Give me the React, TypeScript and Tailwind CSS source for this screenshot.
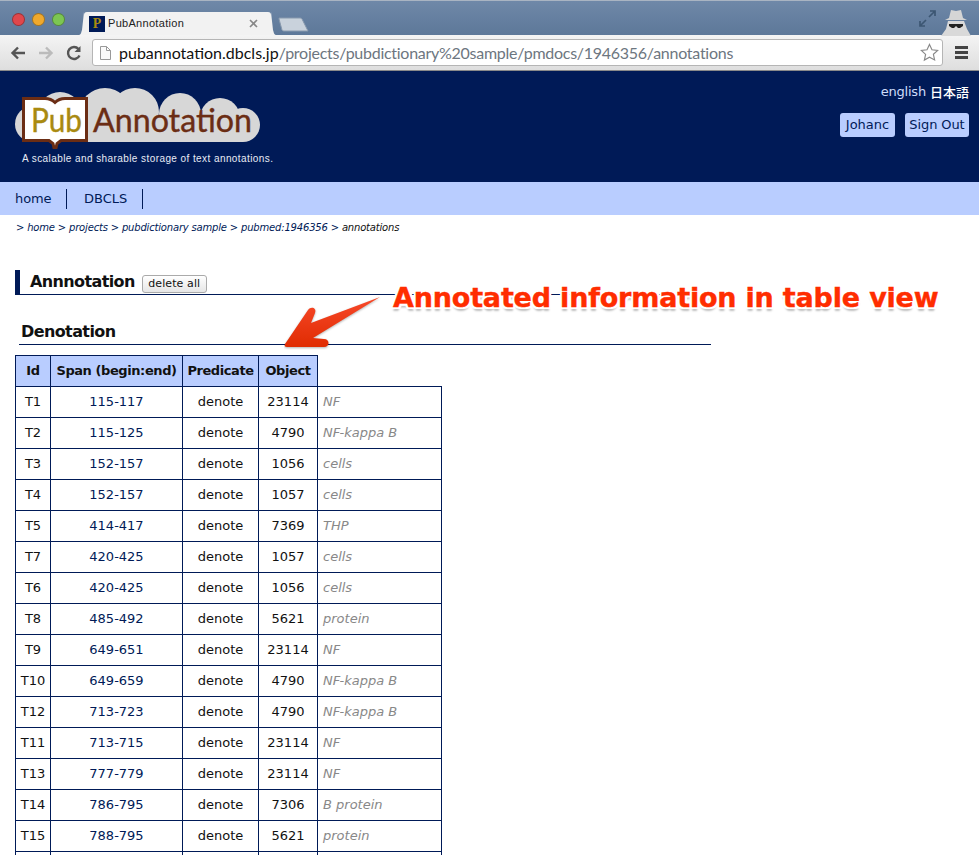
const rows: [string, string, string, string][] = [
  ["T1", "115-117", "23114", "NF"],
  ["T2", "115-125", "4790", "NF-kappa B"],
  ["T3", "152-157", "1056", "cells"],
  ["T4", "152-157", "1057", "cells"],
  ["T5", "414-417", "7369", "THP"],
  ["T7", "420-425", "1057", "cells"],
  ["T6", "420-425", "1056", "cells"],
  ["T8", "485-492", "5621", "protein"],
  ["T9", "649-651", "23114", "NF"],
  ["T10", "649-659", "4790", "NF-kappa B"],
  ["T12", "713-723", "4790", "NF-kappa B"],
  ["T11", "713-715", "23114", "NF"],
  ["T13", "777-779", "23114", "NF"],
  ["T14", "786-795", "7306", "B protein"],
  ["T15", "788-795", "5621", "protein"],
  ["", "", "", ""],
];

function Traffic({ color }: { color: string }) {
  return <div className={`w-[13px] h-[13px] rounded-full border border-black/30 ${color}`} />;
}

function BrowserChrome() {
  return (
    <div className="h-[71px] flex flex-col font-['Liberation_Sans',sans-serif]">
      <div className="h-[35px] flex items-end bg-gradient-to-b from-[#6f88a8] to-[#5d7899] border-t border-[#a9b4c2] relative">
        <div className="flex gap-[7px] pl-[12px] pb-[9px] w-[78px] shrink-0">
          <Traffic color="bg-[#e0474c]" />
          <Traffic color="bg-[#f0a92d]" />
          <Traffic color="bg-[#7cc652]" />
        </div>
        <svg className="w-[6px] h-[23px] shrink-0" viewBox="0 0 6 23">
          <path d="M0 23c3 0 3-2 4-5L6 0v23z" fill="#f2f2f2" />
        </svg>
        <div className="w-[187px] h-[23px] bg-[#f2f2f2] rounded-t-[3px] flex items-center pl-[5px] pr-[13px] text-[#222]">
          <div className="w-[16px] h-[16px] bg-[#001a57] text-[#a98a10] text-[14px] font-bold leading-[16px] text-center font-['Liberation_Serif',serif]">
            P
          </div>
          <span className="ml-[3px] text-[11px] tracking-[0.3px]">PubAnnotation</span>
          <svg className="ml-auto w-[9px] h-[9px]" viewBox="0 0 9 9" stroke="#888" strokeWidth="1.6">
            <path d="M1 1l7 7M8 1L1 8" />
          </svg>
        </div>
        <svg className="w-[6px] h-[23px] shrink-0" viewBox="0 0 6 23">
          <path d="M0 0l2 18c1 3 1 5 4 5H0z" fill="#f2f2f2" />
        </svg>
        <svg className="ml-[1px] mb-[3px] w-[31px] h-[15px] shrink-0" viewBox="0 0 31 15">
          <path d="M1 1h21a2 2 0 0 1 2 1l6 12H6a2 2 0 0 1-2-1L1 2z" fill="#c9d2dc" stroke="#8899ad" />
        </svg>
        <svg className="absolute left-[919px] top-[9px] w-[17px] h-[17px]" viewBox="0 0 17 17" fill="none" stroke="#3c5672" strokeWidth="1.7">
          <path d="M10 7l6-6M11 1h5v5M7 10l-6 6M1 11v5h5" />
        </svg>
        <svg className="absolute left-[939px] top-[7px] w-[34px] h-[28px]" viewBox="0 0 34 28">
          <path d="M10 10l2-8 5 1 5-1 2 8 4 2H6z" fill="#d5d5d5" />
          <path d="M9 13h16l3 8 4 7H2l5-7z" fill="#d9d9d9" />
          <path d="M10 16h14v2l-3 2h-2l-2-2-2 2h-2l-3-2z" fill="#222" />
        </svg>
      </div>
      <div className="h-[36px] bg-gradient-to-b from-[#f4f4f4] to-[#dedede] border-b border-[#8a8a8a] flex items-center">
        <svg className="ml-[10px] w-[16px] h-[14px]" viewBox="0 0 16 14" fill="none" stroke="#555" strokeWidth="2.4">
          <path d="M15 7H3M8 1.5L2.5 7 8 12.5" />
        </svg>
        <svg className="ml-[12px] w-[16px] h-[14px]" viewBox="0 0 16 14" fill="none" stroke="#bbb" strokeWidth="2.4">
          <path d="M1 7h12M8 1.5L13.5 7 8 12.5" />
        </svg>
        <svg className="ml-[12px] w-[16px] h-[16px]" viewBox="0 0 16 16" fill="none" stroke="#555" strokeWidth="2.4">
          <path d="M13.5 10.5A6 6 0 1 1 12.5 4" />
          <path d="M14.5 1v6h-6z" fill="#555" stroke="none" />
        </svg>
        <div className="ml-[10px] w-[851px] h-[27px] bg-white border border-[#b5b5b5] rounded-[3px] flex items-center pl-[7px] pr-[3px]">
          <svg className="w-[11px] h-[14px] shrink-0" viewBox="0 0 11 14" fill="#fafafa" stroke="#999">
            <path d="M.5.5h6l4 4v9H.5zM6.5.5v4h4" />
          </svg>
          <span className="ml-[8px] text-[16px] whitespace-nowrap font-['Lato',sans-serif]">
            <span className="text-[#111]">pubannotation.dbcls.jp</span>
            <span className="text-[#6d7680] tracking-[-0.27px]">/projects/pubdictionary%20sample/pmdocs/1946356/annotations</span>
          </span>
          <svg className="ml-auto w-[19px] h-[19px] shrink-0" viewBox="0 0 20 20" fill="#fff" stroke="#888" strokeWidth="1.2">
            <path d="M10 1.5l2.6 5.6 6 .7-4.5 4.1 1.3 6L10 15l-5.4 3 1.3-6L1.4 7.8l6-.7z" />
          </svg>
        </div>
        <div className="ml-[12px] w-[13px] flex flex-col gap-[2px]">
          <div className="h-[3px] bg-[#444]" />
          <div className="h-[3px] bg-[#444]" />
          <div className="h-[3px] bg-[#444]" />
        </div>
      </div>
    </div>
  );
}

function Logo() {
  return (
    <svg className="w-[245px] h-[63px] block" viewBox="0 0 245 63">
      <g fill="#d7d7d7">
        <circle cx="18" cy="38" r="18" />
        <circle cx="45" cy="28" r="22" />
        <circle cx="90" cy="28" r="26" />
        <circle cx="120" cy="26" r="24" />
        <circle cx="165" cy="28" r="21" />
        <circle cx="205" cy="32" r="20" />
        <circle cx="228" cy="39" r="17" />
        <rect x="18" y="30" width="210" height="26" />
      </g>
      <path
        d="M8.5 12.5H30c4 0 7 1 10 4 3-3 6-4 10-4h21.5v42H46l-4 3-1 4.5h-2l-1-4.5-4-3H8.5z"
        fill="#fff"
        stroke="#6b2d14"
        strokeWidth="3"
      />
      <text x="16" y="46" fontFamily="'Lato', sans-serif" fontSize="32" fill="#a98a10" stroke="#a98a10" strokeWidth="0.4" textLength="51" lengthAdjust="spacingAndGlyphs">
        Pub
      </text>
      <text x="78" y="46" fontFamily="'Lato', sans-serif" fontSize="33" fill="#6b2d14" stroke="#6b2d14" strokeWidth="0.4" textLength="159" lengthAdjust="spacingAndGlyphs">
        Annotation
      </text>
    </svg>
  );
}

function Header() {
  return (
    <div className="h-[111px] bg-[#001a57] flex justify-between">
      <div className="pl-[15px] pt-[15px]">
        <Logo />
        <div className="pl-[7px] mt-[3px] text-[10px] leading-[13px] text-[#e8ecf5] font-['Liberation_Sans',sans-serif] tracking-[0.42px]">
          A scalable and sharable storage of text annotations.
        </div>
      </div>
      <div className="pr-[10px] pt-[13px] flex flex-col items-end">
        <div className="text-[13px] leading-[16px] flex gap-[4px]">
          <span className="text-[#cfdcfb] tracking-[-0.2px]">english</span>
          <span className="text-white font-['Noto_Sans_CJK_JP',sans-serif] font-medium">日本語</span>
        </div>
        <div className="mt-[13px] flex gap-[10px]">
          <div className="w-[55px] h-[24px] leading-[24px] text-center rounded-[3px] bg-[#b9cdff] text-[#001a57] text-[13px]">Johanc</div>
          <div className="w-[64px] h-[24px] leading-[24px] text-center rounded-[3px] bg-[#b9cdff] text-[#001a57] text-[13px] tracking-[-0.1px]">Sign Out</div>
        </div>
      </div>
    </div>
  );
}

function Annotated() {
  return (
    <>
      <svg className="absolute left-[284px] top-[294px] w-[112px] h-[56px]" viewBox="0 0 112 56">
        <defs>
          <linearGradient id="arrowFill" x1="0" y1="0" x2="0" y2="1">
            <stop offset="0" stopColor="#f8492a" />
            <stop offset="1" stopColor="#e02c02" />
          </linearGradient>
        </defs>
        <path
          d="M96 3L27 29l4-10c2-5-4-7-7-3L1 50c-1 2 0 3 2 3h37c6 0 6-8 0-8l-11-1z"
          fill="url(#arrowFill)"
          className="drop-shadow-[0_1px_1px_rgba(0,0,0,0.3)]"
        />
      </svg>
      <div className="absolute left-[393px] top-[280px] text-[27px] leading-[36px] font-bold text-[#ff2d00] whitespace-nowrap font-['DejaVu_Sans',sans-serif] tracking-[-0.19px] [-webkit-text-stroke:0.4px_#ff2d00] [text-shadow:2px_0_0_#fff,-2px_0_0_#fff,0_2px_0_#fff,0_-2px_0_#fff,2px_2px_0_#fff,-2px_2px_0_#fff,2px_-2px_0_#fff,-2px_-2px_0_#fff,0_4px_2px_rgba(0,0,0,0.25)]">
        Annotated information in table view
      </div>
    </>
  );
}

function DenotationTable() {
  const cell = "border border-[#001a57] h-[31px] p-0 text-center";
  const head = `${cell} bg-[#b9cdff] font-bold text-[#111] tracking-[-0.42px]`;
  return (
    <table className="ml-[15px] mt-[10px] border-collapse table-fixed w-[426px] text-[13px] leading-[16px] text-[#111]">
      <colgroup>
        <col className="w-[35px]" />
        <col className="w-[132px]" />
        <col className="w-[76px]" />
        <col className="w-[59px]" />
        <col className="w-[124px]" />
      </colgroup>
      <thead>
        <tr>
          <th className={head}>Id</th>
          <th className={head}>Span (begin:end)</th>
          <th className={head}>Predicate</th>
          <th className={head}>Object</th>
        </tr>
      </thead>
      <tbody>
        {rows.map(([id, span, obj, label], i) => (
          <tr key={i}>
            <td className={cell}>{id}</td>
            <td className={`${cell} text-[#001a57]`}>{span}</td>
            <td className={cell}>{span && "denote"}</td>
            <td className={cell}>{obj}</td>
            <td className={`${cell} !text-left pl-[5px] italic text-[#888]`}>{label}</td>
          </tr>
        ))}
      </tbody>
    </table>
  );
}

export default function App() {
  return (
    <div className="relative w-[979px] h-[855px] overflow-hidden bg-white font-['DejaVu_Sans',sans-serif]">
      <BrowserChrome />
      <Header />
      <div className="h-[33px] bg-[#b9cdff] flex items-center text-[13px] text-[#001a57]">
        <div className="w-[67px] pl-[15px] h-[20px] leading-[20px] border-r border-[#001a57] tracking-[-0.1px]">home</div>
        <div className="w-[76px] pl-[17px] h-[20px] leading-[20px] border-r border-[#001a57]">DBCLS</div>
      </div>
      <div className="pl-[16px] pt-[6px] text-[10px] leading-[13px] italic text-[#001a57] whitespace-nowrap tracking-[-0.18px]">
        &gt; home &gt; projects &gt; pubdictionary sample &gt; pubmed:1946356 &gt; <span className="text-[#111]">annotations</span>
      </div>
      <div className="ml-[15px] mt-[36px] w-[696px] h-[25px] border-l-[5px] border-b border-[#001a57] flex items-start pl-[10px]">
        <span className="pt-[1px] text-[16px] leading-[22px] font-bold text-[#111] tracking-[-0.62px]">Annnotation</span>
        <button className="ml-[7px] mt-[5px] h-[18px] w-[65px] rounded-[3px] border border-[#aaa] bg-gradient-to-b from-white to-[#e6e6e6] text-[11px] leading-[16px] text-[#111] tracking-[0.1px]">
          delete all
        </button>
      </div>
      <div className="ml-[19px] mt-[25px] w-[692px] h-[25px] border-b border-[#001a57] pl-[2px] pt-[1px] text-[16px] leading-[22px] font-bold text-[#111] tracking-[-0.6px]">
        Denotation
      </div>
      <DenotationTable />
      <Annotated />
    </div>
  );
}
